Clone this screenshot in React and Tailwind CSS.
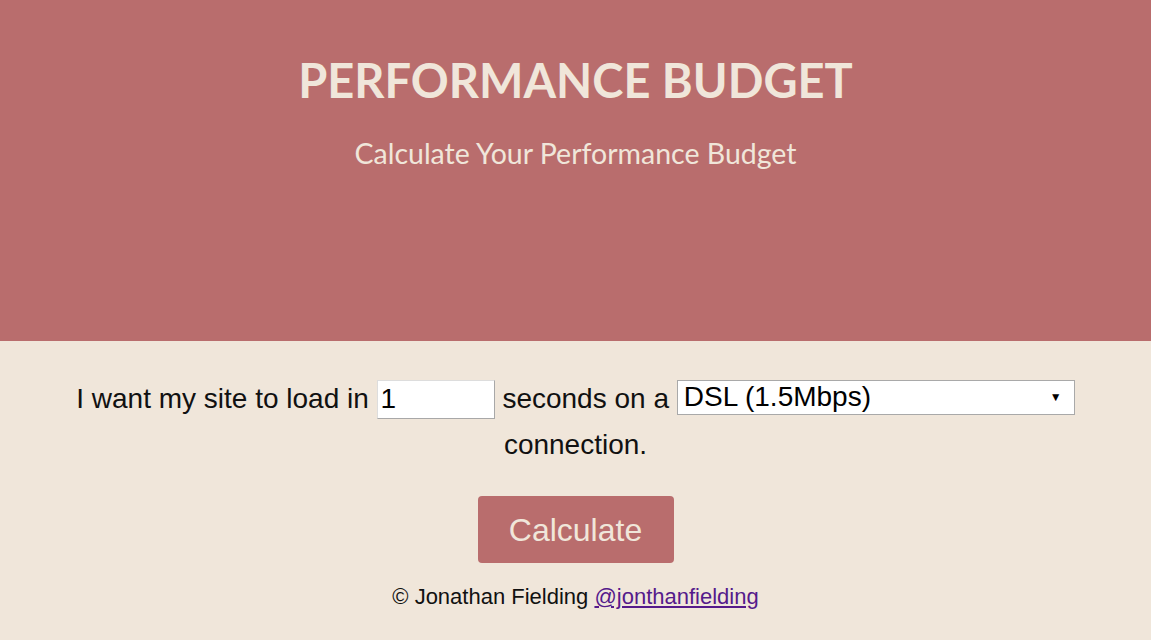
import { useState } from 'react'

export default function App() {
  const [seconds, setSeconds] = useState('1')
  const [speed, setSpeed] = useState('dsl')

  return (
    <div className="min-h-screen bg-[#f0e6da] font-['Liberation_Sans',Arial,sans-serif] text-[#111]">
      <header className="flex h-[341px] flex-col items-center bg-[#b96d6d] pt-[52px] text-center font-['Lato',sans-serif] text-[#f0e6da]">
        <h1 className="text-[47px] font-bold leading-[56px]">PERFORMANCE BUDGET</h1>
        <p className="mt-[27px] text-[28.5px] leading-[36px]">Calculate Your Performance Budget</p>
      </header>

      <main className="mx-auto max-w-[1060px] px-4 pt-[33px] text-center">
        <form className="text-[28px] leading-[46px]" onSubmit={(e) => e.preventDefault()}>
          <label>
            I want my site to load in{' '}
            <input
              type="text"
              value={seconds}
              onChange={(e) => setSeconds(e.target.value)}
              className="h-[39px] w-[118px] border border-[#ddd] border-b-[#a8a8a8] border-r-[#a8a8a8] bg-white px-[3px] align-[0px] text-[28px] leading-[30px] text-black outline-none"
            />
          </label>{' '}
          seconds on a{' '}
          <span className="relative inline-block align-[2px]">
            <select
              value={speed}
              onChange={(e) => setSpeed(e.target.value)}
              className="h-[35px] w-[398px] appearance-none border border-[#a9a9a9] bg-white px-[6px] text-[28px] leading-[30px] text-black outline-none"
            >
              <option value="gprs">GPRS (50Kbps)</option>
              <option value="3g">Regular 3G (750Kbps)</option>
              <option value="dsl">DSL (1.5Mbps)</option>
              <option value="cable">Cable (5Mbps)</option>
            </select>
            <span className="pointer-events-none absolute right-[13px] top-1/2 -translate-y-1/2 text-[12px] leading-[14px] text-black">▼</span>
          </span>{' '}
          connection.
          <div className="mt-[28px]">
            <button
              type="submit"
              className="h-[67px] w-[196px] rounded-[4px] bg-[#b96d6d] text-[32px] text-[#f0e6da]"
            >
              Calculate
            </button>
          </div>
        </form>

        <footer className="mt-[21px] text-[22px] leading-[26px]">
          © Jonathan Fielding{' '}
          <a href="#" className="text-[#551a8b] underline">
            @jonthanfielding
          </a>
        </footer>
      </main>
    </div>
  )
}
